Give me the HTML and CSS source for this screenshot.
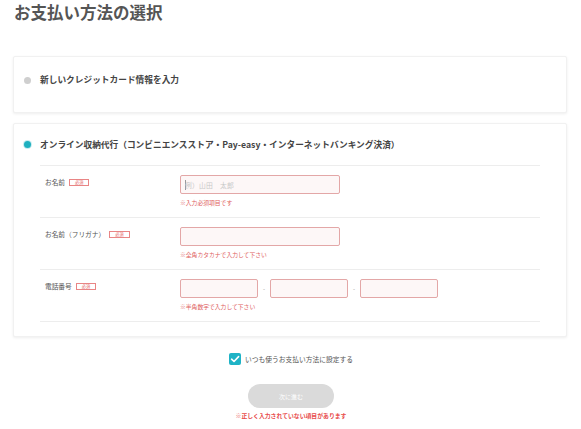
FILE: index.html
```html
<!DOCTYPE html>
<html lang="ja">
<head>
<meta charset="utf-8">
<link rel="stylesheet" href="styles.css">
</head>
<body>
<h1 class="title">お支払い方法の選択</h1>
<div class="wrap">
  <div class="card card-short">
    <div class="method">
      <span class="radio"></span>
      <span class="method-label">新しいクレジットカード情報を入力</span>
    </div>
  </div>
  <div class="card">
    <div class="method method-tall">
      <span class="radio radio-on"></span>
      <span class="method-label">オンライン収納代行（コンビニエンスストア・Pay-easy・インターネットバンキング決済）</span>
    </div>
    <div class="form">
      <div class="row">
        <div class="label">お名前<span class="req">必須</span></div>
        <div class="field">
          <div class="inputs">
            <div class="input input-wide"><span class="caret"></span><span class="ph">例）山田　太郎</span></div>
          </div>
          <div class="note">※入力必須項目です</div>
        </div>
      </div>
      <div class="row">
        <div class="label">お名前（フリガナ）<span class="req">必須</span></div>
        <div class="field">
          <div class="inputs">
            <div class="input input-wide"></div>
          </div>
          <div class="note">※全角カタカナで入力して下さい</div>
        </div>
      </div>
      <div class="row">
        <div class="label">電話番号<span class="req">必須</span></div>
        <div class="field">
          <div class="inputs">
            <div class="input input-tel"></div>
            <span class="dash">-</span>
            <div class="input input-tel"></div>
            <span class="dash">-</span>
            <div class="input input-tel"></div>
          </div>
          <div class="note">※半角数字で入力して下さい</div>
        </div>
      </div>
    </div>
  </div>
  <div class="default-row">
    <span class="check">
      <svg viewBox="0 0 12 12" width="12" height="12"><path d="M2.6 6.2 L5 8.5 L9.6 3.6" fill="none" stroke="#fff" stroke-width="1.6" stroke-linecap="round" stroke-linejoin="round"/></svg>
    </span>
    <span class="default-text">いつも使うお支払い方法に設定する</span>
  </div>
  <div class="actions">
    <div class="btn">次に進む</div>
    <div class="error">※正しく入力されていない項目があります</div>
  </div>
</div>
</body>
</html>
```
FILE: styles.css
```css
* { box-sizing: border-box; }
html, body { margin: 0; padding: 0; background: #fff; }
body {
  font-family: "Noto Sans CJK JP", "Noto Sans", sans-serif;
  color: #555;
  width: 581px;
}
.title {
  margin: 0 0 0 14px;
  font-size: 16.5px;
  line-height: 24px;
  font-weight: 700;
  color: #555;
}
.wrap {
  margin: 32px 14px 0 13px;
  width: 554px;
}
.card {
  background: #fff;
  border: 1px solid #f1f1f1;
  border-radius: 2px;
  box-shadow: 0 1px 3px rgba(0,0,0,0.07);
  padding: 0 26px 14px 10px;
  margin-bottom: 10px;
}
.card-short {
  height: 57px;
  padding-bottom: 0;
}
.method {
  display: flex;
  align-items: center;
  gap: 9px;
  height: 46px;
}
.method-tall { height: 41px; }
.radio {
  width: 7px;
  height: 7px;
  border-radius: 50%;
  background: #cfcfcf;
  flex: none;
}
.radio-on {
  background: #1fb0bf;
  box-shadow: 0 0 0 1px rgba(31,176,191,0.25);
}
.method-label {
  font-size: 8.7px;
  font-weight: 700;
  color: #444;
  line-height: 12px;
  white-space: nowrap;
}
.form { margin-left: 16px; }
.row {
  display: flex;
  height: 52px;
  border-top: 1px solid #ededed;
}
.row:last-child { border-bottom: 1px solid #ededed; height: 53px; }
.label {
  width: 140px;
  padding: 10px 0 0 5px;
  font-size: 6.7px;
  line-height: 12px;
  color: #555;
  display: flex;
  align-items: flex-start;
  white-space: nowrap;
}
.req {
  display: inline-block;
  margin: 2.5px 0 0 4px;
  border: 1px solid #e98585;
  color: #e46a6a;
  font-size: 4.2px;
  line-height: 5px;
  padding: 0 5px;
  height: 7px;
}
.field { padding-top: 9px; }
.inputs {
  display: flex;
  align-items: center;
}
.input {
  height: 19px;
  border: 1px solid #e3a7a7;
  background: #fdf7f7;
  border-radius: 2px;
  display: flex;
  align-items: center;
  padding-left: 4px;
}
.input-wide { width: 160px; }
.input-tel { width: 78px; }
.dash {
  width: 12px;
  text-align: center;
  font-size: 6px;
  color: #999;
}
.caret {
  width: 1px;
  height: 10px;
  background: #999;
  margin-right: -1px;
}
.ph {
  font-size: 6.8px;
  color: #c8c8c8;
  letter-spacing: 0.2px;
}
.note {
  margin-top: 5px;
  font-size: 5.8px;
  line-height: 8px;
  color: #e06060;
  white-space: nowrap;
}
.default-row {
  margin-top: 16px;
  display: flex;
  justify-content: center;
  align-items: center;
  gap: 4px;
  height: 12px;
  padding-left: 2px;
}
.check {
  width: 12px;
  height: 12px;
  border-radius: 2px;
  background: #1fb3c6;
  display: flex;
}
.default-text {
  font-size: 6.75px;
  color: #555;
  line-height: 12px;
}
.actions {
  display: flex;
  flex-direction: column;
  align-items: center;
  margin-top: 19px;
  padding-left: 2px;
}
.btn {
  width: 86px;
  height: 24px;
  border-radius: 12px;
  background: #dadada;
  color: #fff;
  font-size: 6px;
  display: flex;
  align-items: center;
  justify-content: center;
}
.error {
  margin-top: 4px;
  font-size: 5.85px;
  line-height: 8px;
  font-weight: 700;
  color: #e84b4b;
  white-space: nowrap;
}
```
